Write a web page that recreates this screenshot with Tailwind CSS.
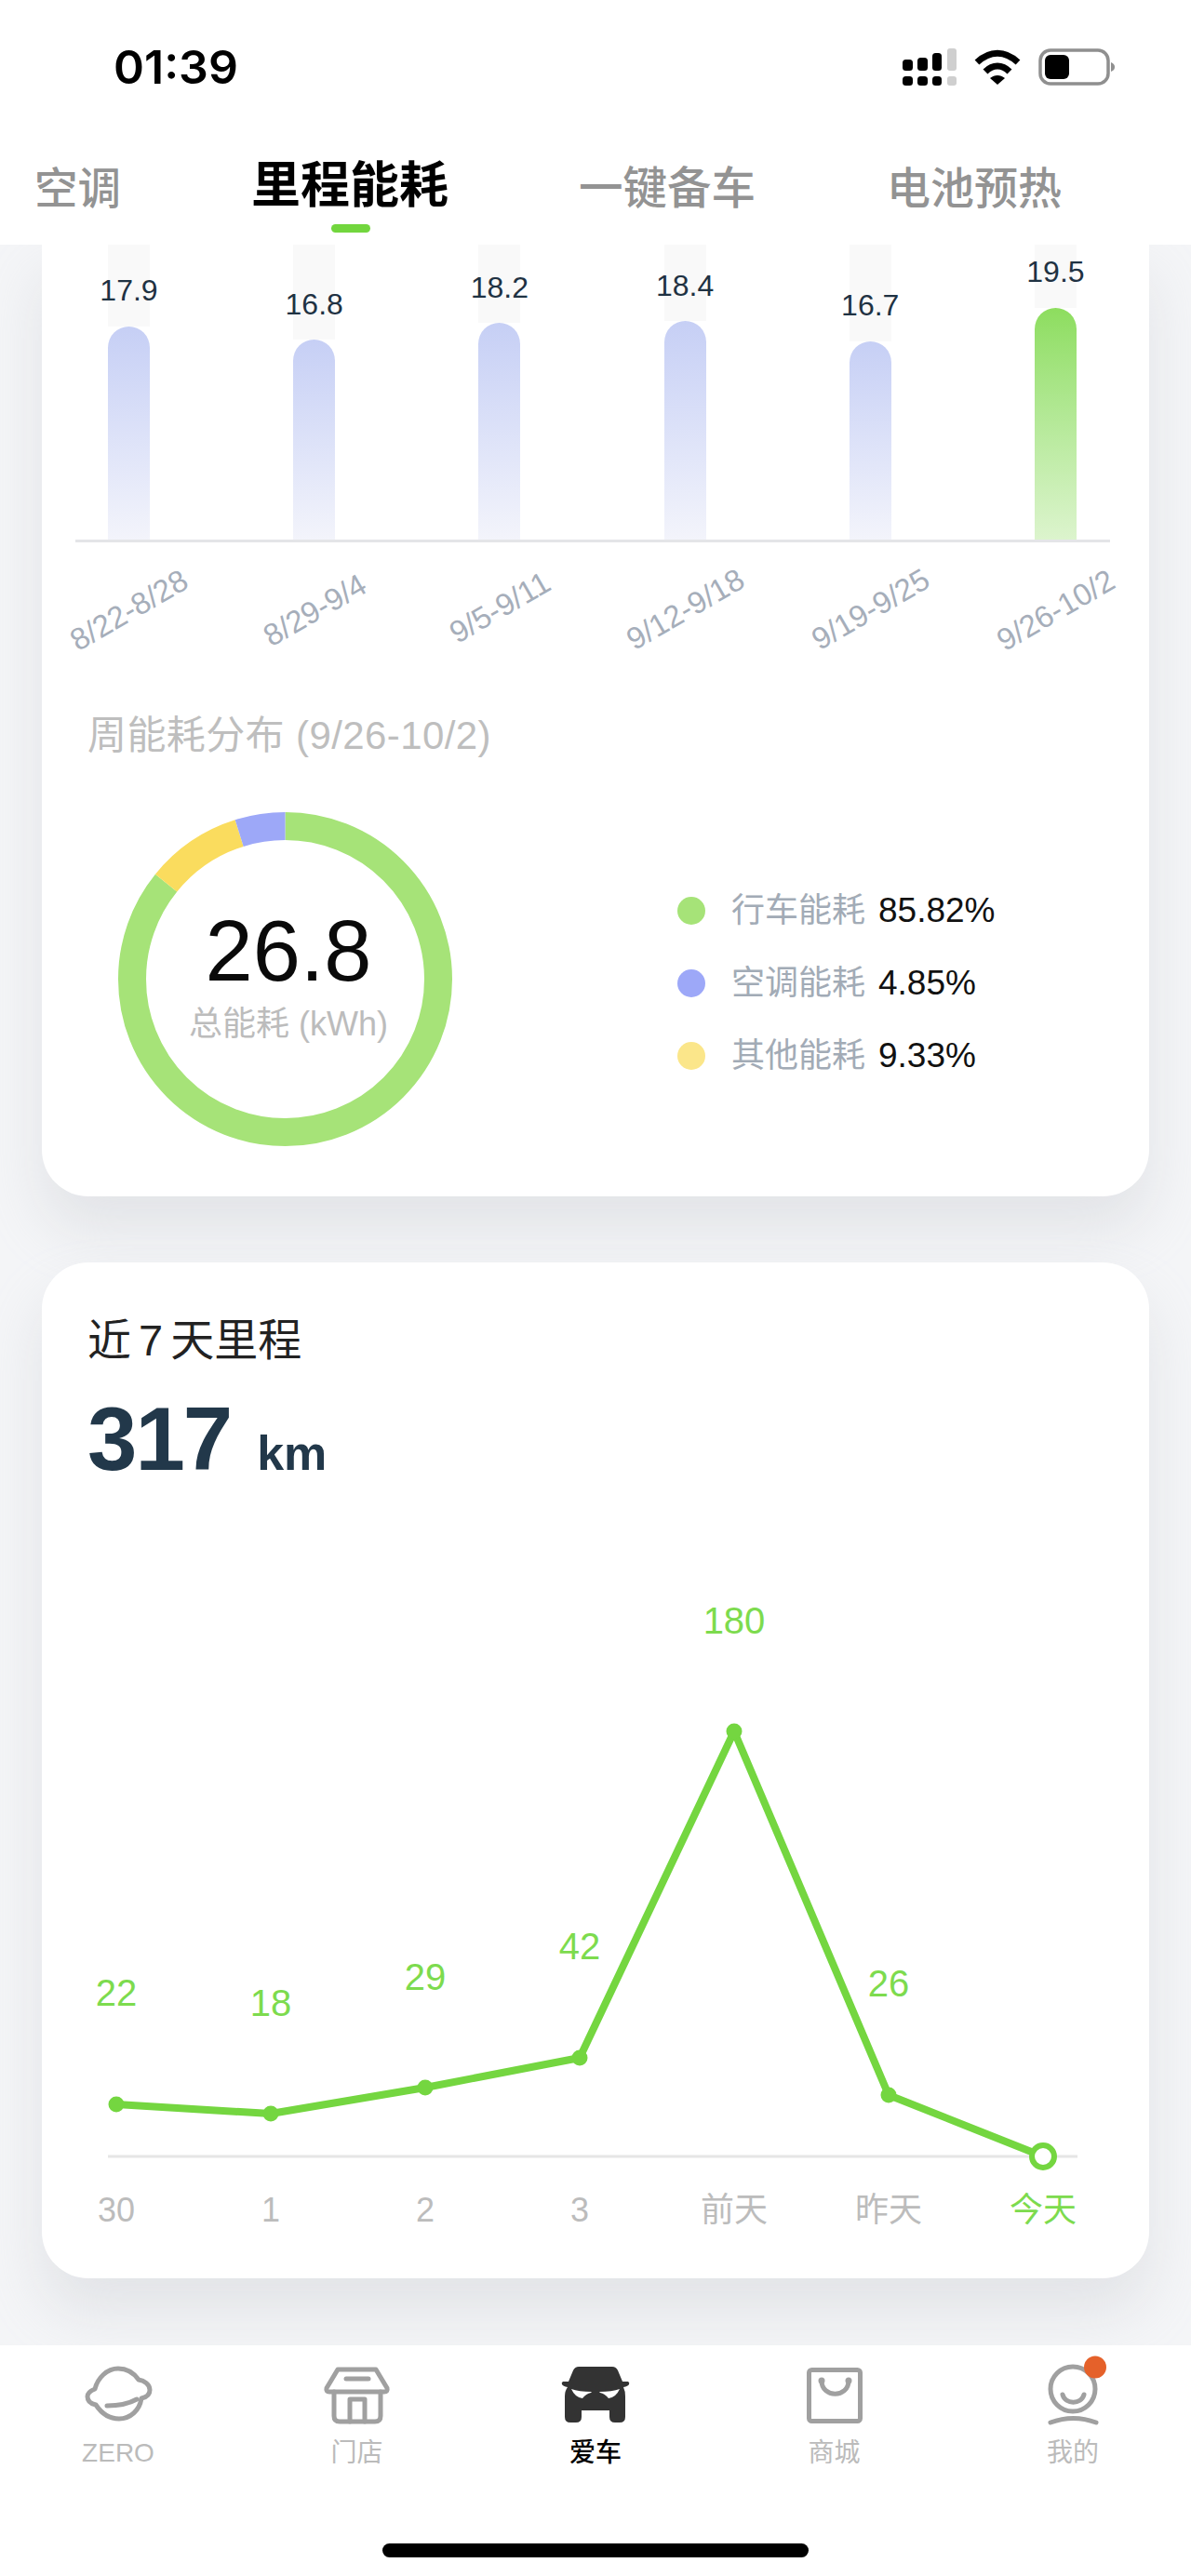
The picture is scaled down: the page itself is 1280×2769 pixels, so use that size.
<!DOCTYPE html>
<html lang="zh">
<head>
<meta charset="utf-8">
<script src="https://cdn.jsdelivr.net/npm/@tailwindcss/browser@4"></script>
</head>
<body class="m-0 bg-[#f4f5f7] font-['Liberation_Sans','Noto_Sans_CJK_SC',sans-serif]">
<div class="w-[1280px] h-[2769px] flex flex-col overflow-hidden">

  <!-- header -->
  <header class="h-[263px] shrink-0 bg-white relative z-10 flex flex-col">
    <div class="h-[170px] shrink-0 flex justify-between pl-[122px] pr-[82px] pt-[46px]">
      <span class="font-['Inter'] font-semibold text-[50px] leading-[52px] text-black">01:39</span>
      <svg width="230" height="44" viewBox="968 50 230 44" class="mt-[4px]">
        <g fill="#000">
          <rect x="970" y="64" width="11" height="12" rx="3.5"/><rect x="986" y="62" width="11" height="14" rx="3.5"/><rect x="1002" y="57" width="10" height="19" rx="3.5"/>
          <rect x="970" y="82" width="11" height="10" rx="3.5"/><rect x="986" y="82" width="11" height="10" rx="3.5"/><rect x="1002" y="82" width="10" height="10" rx="3.5"/>
        </g>
        <rect x="1018" y="52" width="10" height="24" rx="3" fill="#cfcfcf"/><rect x="1018" y="82" width="10" height="10" rx="3" fill="#cfcfcf"/>
        <g fill="none" stroke="#000" stroke-width="7">
          <path d="M1050 67 C1064 54 1080 54 1094 67"/>
          <path d="M1059 77 C1067 69 1077 69 1085 77"/>
        </g>
        <path d="M1064 84 C1069 80 1075 80 1080 84 L1072 91 Z" fill="#000"/>
        <rect x="1118" y="54" width="73" height="36" rx="11" fill="none" stroke="#8f8f8f" stroke-width="3.5"/>
        <rect x="1123" y="59" width="26" height="26" rx="6" fill="#000"/>
        <path d="M1194 67 C1197 68 1198 70 1198 72 C1198 74 1197 76 1194 77 Z" fill="#8f8f8f"/>
      </svg>
    </div>
    <nav class="relative h-[93px] text-[#939393]">
      <span class="absolute left-[37px] top-[5px] text-[46.5px] leading-[56px] font-medium">空调</span>
      <span class="absolute left-[270px] top-[0px] text-[53px] leading-[60px] font-bold text-black">里程能耗</span>
      <span class="absolute left-[622px] top-[5px] text-[47.5px] leading-[56px] font-medium">一键备车</span>
      <span class="absolute left-[953px] top-[5px] text-[47px] leading-[56px] font-medium">电池预热</span>
      <span class="absolute left-[356px] top-[71px] w-[42px] h-[9px] rounded-full bg-[#72d63e]"></span>
    </nav>
  </header>

  <main class="flex-1 min-h-0 px-[45px] flex flex-col gap-[71px] overflow-hidden">
    <!-- energy card -->
    <section class="h-[1023px] shrink-0 bg-white rounded-b-[50px] shadow-[0_36px_60px_rgba(190,192,200,0.32)] flex flex-col">
      <div class="relative h-[317px] shrink-0 flex justify-between pl-[71px] pr-[78px]">
        <div class="w-[45px] flex flex-col"><div class="h-[88px] bg-[#f9f9f9] relative"><span class="absolute left-1/2 -translate-x-1/2 top-[31px] text-[32px] leading-[36px] text-[#1f3243]">17.9</span></div><div class="flex-1 rounded-t-full bg-gradient-to-b from-[#c6cff5] to-[#f3f4fb]"></div></div>
        <div class="w-[45px] flex flex-col"><div class="h-[102px] bg-[#f9f9f9] relative"><span class="absolute left-1/2 -translate-x-1/2 top-[46px] text-[32px] leading-[36px] text-[#1f3243]">16.8</span></div><div class="flex-1 rounded-t-full bg-gradient-to-b from-[#c6cff5] to-[#f3f4fb]"></div></div>
        <div class="w-[45px] flex flex-col"><div class="h-[84px] bg-[#f9f9f9] relative"><span class="absolute left-1/2 -translate-x-1/2 top-[28px] text-[32px] leading-[36px] text-[#1f3243]">18.2</span></div><div class="flex-1 rounded-t-full bg-gradient-to-b from-[#c6cff5] to-[#f3f4fb]"></div></div>
        <div class="w-[45px] flex flex-col"><div class="h-[82px] bg-[#f9f9f9] relative"><span class="absolute left-1/2 -translate-x-1/2 top-[26px] text-[32px] leading-[36px] text-[#1f3243]">18.4</span></div><div class="flex-1 rounded-t-full bg-gradient-to-b from-[#c6cff5] to-[#f3f4fb]"></div></div>
        <div class="w-[45px] flex flex-col"><div class="h-[104px] bg-[#f9f9f9] relative"><span class="absolute left-1/2 -translate-x-1/2 top-[47px] text-[32px] leading-[36px] text-[#1f3243]">16.7</span></div><div class="flex-1 rounded-t-full bg-gradient-to-b from-[#c6cff5] to-[#f3f4fb]"></div></div>
        <div class="w-[45px] flex flex-col"><div class="h-[68px] bg-[#f9f9f9] relative"><span class="absolute left-1/2 -translate-x-1/2 top-[11px] text-[32px] leading-[36px] text-[#1f3243]">19.5</span></div><div class="flex-1 rounded-t-full bg-gradient-to-b from-[#8ddd5e] to-[#dcf4cd]"></div></div>
      </div>
      <div class="h-[3px] shrink-0 bg-[#e4e5e8] ml-[36px] mr-[42px]"></div>
      <div class="h-[150px] shrink-0 flex justify-between pl-[44px] pr-[50px]">
        <div class="w-[100px] h-[146px] flex items-center justify-center"><span class="-rotate-30 whitespace-nowrap text-[33px] leading-[34px] text-[#a6aeba]">8/22-8/28</span></div>
        <div class="w-[100px] h-[146px] flex items-center justify-center"><span class="-rotate-30 whitespace-nowrap text-[33px] leading-[34px] text-[#a6aeba]">8/29-9/4</span></div>
        <div class="w-[100px] h-[140px] flex items-center justify-center"><span class="-rotate-30 whitespace-nowrap text-[33px] leading-[34px] text-[#a6aeba]">9/5-9/11</span></div>
        <div class="w-[100px] h-[144px] flex items-center justify-center"><span class="-rotate-30 whitespace-nowrap text-[33px] leading-[34px] text-[#a6aeba]">9/12-9/18</span></div>
        <div class="w-[100px] h-[144px] flex items-center justify-center"><span class="-rotate-30 whitespace-nowrap text-[33px] leading-[34px] text-[#a6aeba]">9/19-9/25</span></div>
        <div class="w-[100px] h-[146px] flex items-center justify-center"><span class="-rotate-30 whitespace-nowrap text-[33px] leading-[34px] text-[#a6aeba]">9/26-10/2</span></div>
      </div>
      <h2 class="mt-[33px] ml-[49px] text-[42px] leading-[50px] font-normal tracking-[0.4px] text-[#bebebe]">周能耗分布 (9/26-10/2)</h2>
      <div class="mt-[57px] flex items-center">
        <div class="relative ml-[82px] w-[359px] h-[359px] shrink-0">
          <svg width="359" height="359" viewBox="0 0 359 359" class="-rotate-90">
            <circle cx="179.5" cy="179.5" r="164.5" fill="none" stroke="#a6e378" stroke-width="30" pathLength="100" stroke-dasharray="85.82 100"/>
            <circle cx="179.5" cy="179.5" r="164.5" fill="none" stroke="#fadc5e" stroke-width="30" pathLength="100" stroke-dasharray="9.33 100" stroke-dashoffset="-85.82"/>
            <circle cx="179.5" cy="179.5" r="164.5" fill="none" stroke="#9da8f8" stroke-width="30" pathLength="100" stroke-dasharray="4.85 100" stroke-dashoffset="-95.15"/>
          </svg>
          <div class="absolute inset-0 flex flex-col items-center pt-[97px] pl-[7px]">
            <span class="text-[92px] leading-[104px] text-[#0a0a0a]">26.8</span>
            <span class="text-[36px] leading-[42px] text-[#bcbcbc] whitespace-nowrap mt-[6px]">总能耗 (kWh)</span>
          </div>
        </div>
        <ul class="ml-[242px] flex flex-col gap-[36px] mt-[8px]">
          <li class="flex items-center h-[42px]"><span class="w-[30px] h-[30px] rounded-full bg-[#a6e378]"></span><span class="ml-[28px] text-[36px] leading-[42px] text-[#a2abb6]">行车能耗</span><span class="ml-[14px] text-[37px] leading-[42px] text-[#111]">85.82%</span></li>
          <li class="flex items-center h-[42px]"><span class="w-[30px] h-[30px] rounded-full bg-[#9da8f8]"></span><span class="ml-[28px] text-[36px] leading-[42px] text-[#a2abb6]">空调能耗</span><span class="ml-[14px] text-[37px] leading-[42px] text-[#111]">4.85%</span></li>
          <li class="flex items-center h-[42px]"><span class="w-[30px] h-[30px] rounded-full bg-[#fbe68a]"></span><span class="ml-[28px] text-[36px] leading-[42px] text-[#a2abb6]">其他能耗</span><span class="ml-[14px] text-[37px] leading-[42px] text-[#111]">9.33%</span></li>
        </ul>
      </div>
    </section>

    <!-- mileage card -->
    <section class="h-[1092px] shrink-0 bg-white rounded-[50px] shadow-[0_36px_60px_rgba(190,192,200,0.32)] relative">
      <h2 class="absolute left-[49px] top-[57px] text-[47px] leading-[54px] font-normal text-[#222]">近<span class="mx-[8px]">7</span>天里程</h2>
      <p class="absolute left-[49px] top-[135px] flex items-baseline font-bold text-[#22384a]"><span class="text-[96px] leading-[110px] tracking-[-2px]">317</span><span class="ml-[28px] text-[52px] leading-[60px]">km</span></p>
      <svg width="1190" height="1092" viewBox="45 1357 1190 1092" class="absolute left-0 top-0" font-family="Liberation Sans, Noto Sans CJK SC, sans-serif">
        <line x1="116" y1="2318" x2="1158" y2="2318" stroke="#e6e6e6" stroke-width="3"/>
        <polyline points="125,2262 291,2272 457,2244 623,2212 789,1861 955,2252 1121,2318" fill="none" stroke="#74d640" stroke-width="8" stroke-linejoin="round"/>
        <g fill="#74d640">
          <circle cx="125" cy="2262" r="8.5"/><circle cx="291" cy="2272" r="8.5"/><circle cx="457" cy="2244" r="8.5"/><circle cx="623" cy="2212" r="8.5"/><circle cx="789" cy="1861" r="8.5"/><circle cx="955" cy="2252" r="8.5"/>
        </g>
        <circle cx="1121" cy="2318" r="12" fill="#fff" stroke="#74d640" stroke-width="6"/>
        <g fill="#7ddb4e" font-size="40" text-anchor="middle">
          <text x="125" y="2156">22</text><text x="291" y="2167">18</text><text x="457" y="2139">29</text><text x="623" y="2106">42</text><text x="789" y="1756">180</text><text x="955" y="2146">26</text>
        </g>
        <g fill="#bcbcbc" font-size="36" text-anchor="middle">
          <text x="125" y="2388">30</text><text x="291" y="2388">1</text><text x="457" y="2388">2</text><text x="623" y="2388">3</text><text x="789" y="2388">前天</text><text x="955" y="2388">昨天</text><text x="1121" y="2388" fill="#7ddb4e">今天</text>
        </g>
      </svg>
    </section>
  </main>

  <!-- tab bar -->
  <footer class="h-[248px] shrink-0 bg-white relative z-10 flex flex-col">
    <div class="flex justify-between px-[77px] pt-[21px] text-[28px] leading-[34px] text-[#bbbbbb]">
      <div class="w-[100px] flex flex-col items-center gap-[12px]">
        <svg width="80" height="66" viewBox="87 2542 80 66" fill="none" stroke="#a0a0a0" stroke-width="5" stroke-linecap="round" stroke-linejoin="round">
          <path d="M127 2546 C137 2546 144 2551 149 2558 C155 2559 161 2563 161 2569 C161 2574 157 2577 152 2578 C150 2591 140 2600 128 2600 C117 2600 109 2594 103 2585 C98 2584 94 2581 94 2576 C94 2572 97 2570 102 2568 C105 2556 115 2546 127 2546 Z"/>
          <path d="M115 2586 C127 2586 138 2584 147 2579"/>
        </svg>
        <span>ZERO</span>
      </div>
      <div class="w-[100px] flex flex-col items-center gap-[12px]">
        <svg width="80" height="66" viewBox="343 2542 80 66" fill="none" stroke="#a0a0a0" stroke-width="5" stroke-linecap="round" stroke-linejoin="round">
          <path d="M362 2547 H403 L415 2567 Q416 2571 412 2571 H353 Q349 2571 350 2567 Z"/>
          <path d="M358 2571 V2597 Q358 2603 364 2603 H402 Q408 2603 408 2597 V2571"/>
          <path d="M375 2603 V2579 H391 V2603"/>
          <path d="M371 2557 H395"/>
        </svg>
        <span>门店</span>
      </div>
      <div class="w-[100px] flex flex-col items-center gap-[12px] text-black font-medium">
        <svg width="80" height="66" viewBox="600 2542 80 66" fill="#333">
          <path d="M622 2544 H658 Q662 2544 664 2548 L669 2560 L675 2560 Q677 2561 676 2563 Q675 2565 670 2566 Q672 2570 672 2576 V2598 Q672 2604 666 2604 H661 Q655 2604 655 2598 V2591 H625 V2598 Q625 2604 619 2604 H613 Q607 2604 607 2598 V2576 Q607 2570 610 2566 Q605 2565 604 2563 Q603 2561 605 2560 L611 2560 L616 2548 Q618 2544 622 2544 Z"/>
          <path d="M614 2568 Q622 2571 636 2571 L635 2572 Q630 2573 626 2578 Q618 2577 614 2568 Z" fill="#fff"/>
          <path d="M666 2568 Q658 2571 644 2571 L645 2572 Q650 2573 654 2578 Q662 2577 666 2568 Z" fill="#fff"/>
        </svg>
        <span>爱车</span>
      </div>
      <div class="w-[100px] flex flex-col items-center gap-[12px]">
        <svg width="80" height="66" viewBox="854 2542 80 66" fill="none" stroke="#a0a0a0" stroke-width="5" stroke-linejoin="round">
          <rect x="866.5" y="2547.5" width="55" height="55" rx="3"/>
          <path d="M880 2559 C880 2578 909 2578 909 2559" stroke-linecap="round"/>
          <circle cx="880" cy="2559" r="3.5" fill="#a0a0a0" stroke="none"/><circle cx="909" cy="2559" r="3.5" fill="#a0a0a0" stroke="none"/>
        </svg>
        <span>商城</span>
      </div>
      <div class="w-[100px] flex flex-col items-center gap-[12px]">
        <svg width="80" height="66" viewBox="1111 2542 80 66" fill="none" stroke="#a0a0a0" stroke-width="5" stroke-linecap="round" class="overflow-visible">
          <circle cx="1151" cy="2568" r="24"/>
          <path d="M1140 2574 C1143 2585 1160 2585 1163 2574"/>
          <path d="M1127 2604 C1143 2598 1160 2598 1176 2604"/>
          <circle cx="1175" cy="2544.5" r="12" fill="#e5612a" stroke="none"/>
        </svg>
        <span>我的</span>
      </div>
    </div>
    <div class="mt-[80px] mx-auto w-[458px] h-[15px] rounded-full bg-black"></div>
  </footer>
</div>
</body>
</html>
